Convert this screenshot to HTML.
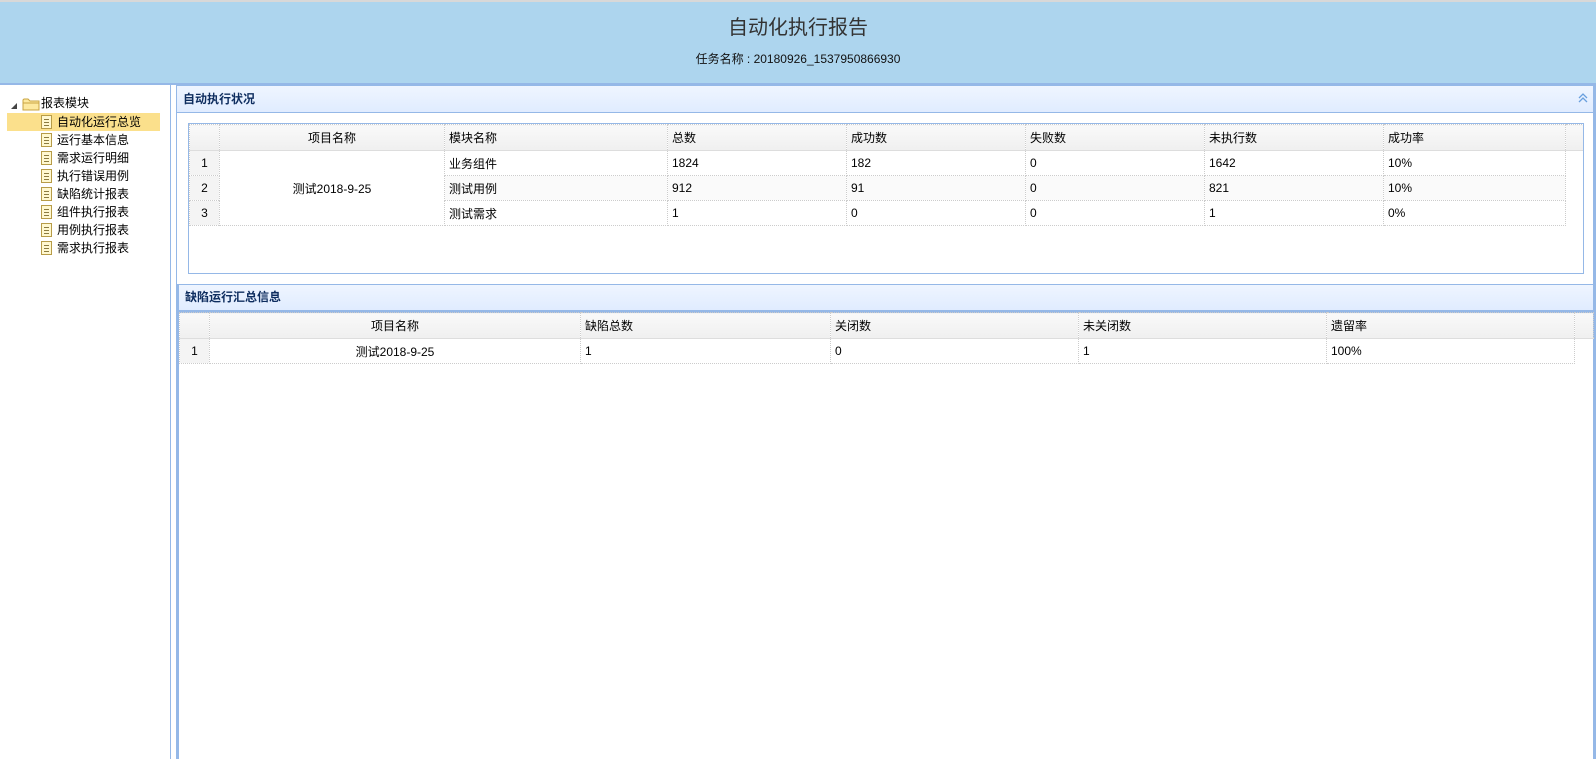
<!DOCTYPE html>
<html><head><meta charset="utf-8">
<style>
*{margin:0;padding:0;box-sizing:border-box}
body{width:1596px;height:759px;overflow:hidden;background:#fff;font-family:"Liberation Sans","Noto Sans CJK SC",sans-serif;font-size:12px;color:#000;position:relative}
.abs{position:absolute}
#hdr{left:0;top:0;width:1596px;height:85px;background:#add5ee;border-top:2px solid #d8d8d8;border-bottom:2px solid #95b8e7}
#title{left:0;top:11px;width:1596px;text-align:center;font-size:20px;color:#333}
#sub{left:0;top:50px;width:1596px;text-align:center;font-size:12px;color:#111}
#side{left:0;top:85px;width:171px;height:674px;border-right:1px solid #95b8e7;background:#fff}
.it{position:absolute;left:7px;width:153px;height:18px;line-height:18px;padding-left:50px;white-space:nowrap}
.sel{background:#fbe08c}
.doc{position:absolute;left:34px;top:2px;width:11px;height:14px;border:1px solid #b79c48;background:#fff8d0}
.doc i{position:absolute;left:2px;right:2px;height:1px;background:#8a7a40}
.panel{border:1px solid #95b8e7;background:#fff}
.ph{background:linear-gradient(#eff5ff,#e0ecff);border-bottom:1px solid #95b8e7;font-weight:bold;color:#0e2d5f;padding-left:6px;line-height:26px}
table{border-collapse:collapse;position:absolute;table-layout:fixed}
td{border:1px dotted #ccc;height:25px;padding:0 4px;white-space:nowrap;overflow:hidden}
tr.h td{background:linear-gradient(#f9f9f9,#efefef);height:26px;border-bottom:1px solid #ddd}
td.n{background:#f4f4f4;text-align:center}
td.c{text-align:center}
tr.alt td{background:#fafafa}
tr.alt td.n{background:#f4f4f4}
td.e{border:none !important;background:transparent !important}
</style></head><body>
<div id="hdr" class="abs"></div>
<div id="title" class="abs">自动化执行报告</div>
<div id="sub" class="abs">任务名称 : 20180926_1537950866930</div>

<div id="side" class="abs">
  <div class="abs" style="left:11px;top:18px;width:0;height:0;border-left:6px solid transparent;border-bottom:6px solid #444"></div>
  <svg class="abs" style="left:22px;top:12px" width="18" height="14"><path d="M1 3 L1 13 L17 13 L17 4 L8 4 L6 2 L2 2 Z" fill="#fde9a0" stroke="#c9a442"/><path d="M1 6 L17 6" stroke="#c9a442"/></svg>
  <div class="abs" style="left:41px;top:9px;line-height:18px">报表模块</div>
  <div class="it sel" style="top:28px"><span class="doc"><i style="top:3px"></i><i style="top:6px"></i><i style="top:9px"></i></span>自动化运行总览</div>
  <div class="it" style="top:46px"><span class="doc"><i style="top:3px"></i><i style="top:6px"></i><i style="top:9px"></i></span>运行基本信息</div>
  <div class="it" style="top:64px"><span class="doc"><i style="top:3px"></i><i style="top:6px"></i><i style="top:9px"></i></span>需求运行明细</div>
  <div class="it" style="top:82px"><span class="doc"><i style="top:3px"></i><i style="top:6px"></i><i style="top:9px"></i></span>执行错误用例</div>
  <div class="it" style="top:100px"><span class="doc"><i style="top:3px"></i><i style="top:6px"></i><i style="top:9px"></i></span>缺陷统计报表</div>
  <div class="it" style="top:118px"><span class="doc"><i style="top:3px"></i><i style="top:6px"></i><i style="top:9px"></i></span>组件执行报表</div>
  <div class="it" style="top:136px"><span class="doc"><i style="top:3px"></i><i style="top:6px"></i><i style="top:9px"></i></span>用例执行报表</div>
  <div class="it" style="top:154px"><span class="doc"><i style="top:3px"></i><i style="top:6px"></i><i style="top:9px"></i></span>需求执行报表</div>
</div>

<div class="abs panel" style="left:176px;top:85px;width:1420px;height:200px;border-width:1px 3px 1px 1px">
  <div class="ph">自动执行状况</div>
  <svg class="abs" style="right:4px;top:6px" width="12" height="12"><path d="M2 6 L6 2 L10 6 M2 10 L6 6 L10 10" fill="none" stroke="#6aa0de" stroke-width="1.3"/></svg>
</div>
<table style="left:189px;top:124px;width:1394px">
<colgroup><col style="width:30px"><col style="width:225px"><col style="width:223px"><col style="width:179px"><col style="width:179px"><col style="width:179px"><col style="width:179px"><col style="width:182px"><col style="width:18px"></colgroup>
<tr class="h"><td></td><td class="c">项目名称</td><td>模块名称</td><td>总数</td><td>成功数</td><td>失败数</td><td>未执行数</td><td>成功率</td><td></td></tr>
<tr><td class="n">1</td><td class="c" rowspan="3" style="background:#fff">测试2018-9-25</td><td>业务组件</td><td>1824</td><td>182</td><td>0</td><td>1642</td><td>10%</td><td class="e"></td></tr>
<tr class="alt"><td class="n">2</td><td>测试用例</td><td>912</td><td>91</td><td>0</td><td>821</td><td>10%</td><td class="e"></td></tr>
<tr><td class="n">3</td><td>测试需求</td><td>1</td><td>0</td><td>0</td><td>1</td><td>0%</td><td class="e"></td></tr>
</table>
<div class="abs" style="left:188px;top:123px;width:1396px;height:151px;border:1px solid #95b8e7"></div>

<div class="abs panel" style="left:176px;top:284px;width:1420px;height:475px;border-width:1px 3px 0 3px">
  <div class="ph" style="border-bottom:3px solid #95b8e7;line-height:25px">缺陷运行汇总信息</div>
</div>
<table style="left:179px;top:312px;width:1414px">
<colgroup><col style="width:30px"><col style="width:371px"><col style="width:250px"><col style="width:248px"><col style="width:248px"><col style="width:248px"><col style="width:19px"></colgroup>
<tr class="h"><td></td><td class="c">项目名称</td><td>缺陷总数</td><td>关闭数</td><td>未关闭数</td><td>遗留率</td><td></td></tr>
<tr><td class="n">1</td><td class="c">测试2018-9-25</td><td>1</td><td>0</td><td>1</td><td>100%</td><td class="e"></td></tr>
</table>
</body></html>
